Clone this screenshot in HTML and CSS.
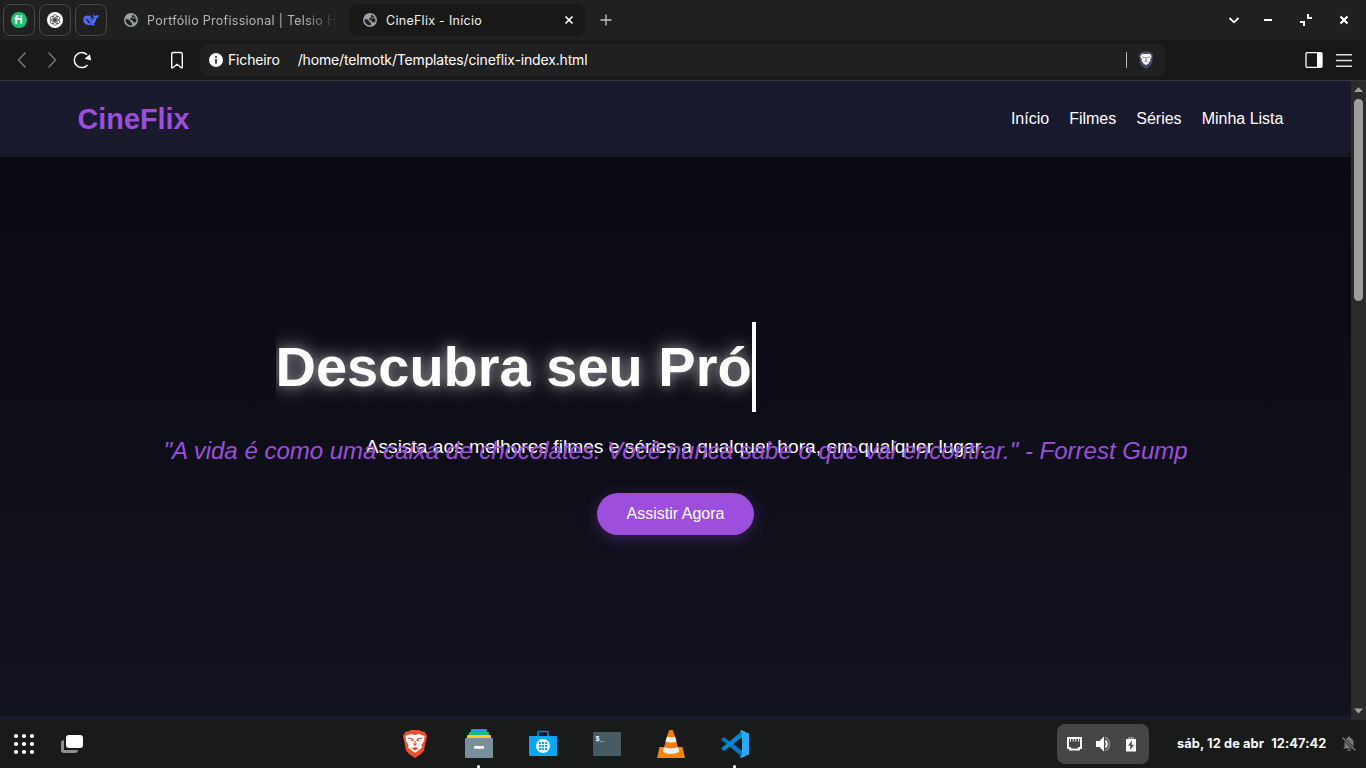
FILE: index.html
```html
<!DOCTYPE html>
<html lang="pt">
<head>
<meta charset="utf-8">
<title>CineFlix - Início</title>
<link rel="stylesheet" href="styles.css">
</head>
<body>
<svg class="defs" width="0" height="0">
  <symbol id="globe" viewBox="0 0 14 14"><circle cx="7" cy="7" r="7" fill="#9aa0a6"/><path d="M1.500 6.300H4l2.500 2v1.200h1.300l.4 2.800A5.600 5.600 0 0 1 1.500 6.300ZM8.200 1.700c3 .8 4.500 3.400 4.200 6.200l-1.100 1.700-2.100-.3-.5-1.700-2.400-.8V5.300l1.800-.8Z" fill="#202020"/><path d="m8.500 5.500 2-1.200 1 1.500" stroke="#9aa0a6" stroke-width="1" fill="none"/></symbol>
</svg>
<div class="tabbar">
  <div class="pins">
    <div class="pin"><svg width="18" height="18" viewBox="0 0 18 18"><circle cx="9" cy="9" r="8" fill="#1dbf73"/><path d="M4.400 7.700h6.900v5.100M6.200 12.800V7c0-1.700.8-2.300 2.500-2.100" fill="none" stroke="#fff" stroke-width="1.900"/><circle cx="11.300" cy="5.200" r="1.100" fill="#fff"/></svg></div>
    <div class="pin"><svg width="18" height="18" viewBox="0 0 18 18"><circle cx="9" cy="9" r="8" fill="#fff"/><g fill="none" stroke="#333" stroke-width=".65"><ellipse cx="9" cy="6.600" rx="2.200" ry="3"/><ellipse cx="9" cy="6.600" rx="2.200" ry="3" transform="rotate(60 9 9)"/><ellipse cx="9" cy="6.600" rx="2.200" ry="3" transform="rotate(120 9 9)"/><ellipse cx="9" cy="6.600" rx="2.200" ry="3" transform="rotate(180 9 9)"/><ellipse cx="9" cy="6.600" rx="2.200" ry="3" transform="rotate(240 9 9)"/><ellipse cx="9" cy="6.600" rx="2.200" ry="3" transform="rotate(300 9 9)"/></g></svg></div>
    <div class="pin"><svg width="18" height="18" viewBox="0 0 18 18"><path d="M1.200 8.500C1.200 5.600 3.800 4.200 6.300 4.700c1 .2 1.300-.4 2.200-.2-.2.900.2 1.300.8 1.800 1 .8 1.700 1.300 2.300 2.100.6-.7.7-1.300 0-2.100-.6-.8-.6-2-.1-2.900.8 1.100 1.500 1.700 2.500 1.400 1-.4 1.600-.7 2.800-.8 0 2-1.200 3.300-2.700 3.600-.2 2.500-1.100 4.300-2.500 5.500l1.500 1.200c-1.500.6-2.800.3-4.200-.5-4 1.400-7.700-1.400-7.700-5.300Z" fill="#4d6bfe"/><path d="M3.200 7.500c2.500 0 4 2.300 5.400 4.400l1.300.5c-1.600.4-2.900-.1-4.100-1.400C4.600 9.800 4.500 8.800 3.200 7.500Z" fill="#202020"/><path d="M7.800 7.700c1.400-.1 2.200.7 2.300 2" fill="none" stroke="#202020" stroke-width=".9"/></svg></div>
  </div>
  <div class="tab"><svg width="14" height="14"><use href="#globe"/></svg><span class="tab-label faded">Portfólio Profissional | Telsio H.</span></div>
  <div class="tab active"><svg width="14" height="14"><use href="#globe"/></svg><span class="tab-label">CineFlix - Início</span><svg class="close" width="10" height="10" viewBox="0 0 10 10"><path d="M1.500 1.500l7 7m0-7l-7 7" stroke="#fff" stroke-width="1.700"/></svg></div>
  <svg class="plus" width="12" height="12" viewBox="0 0 12 12"><path d="M6 .5v11M.5 6h11" stroke="#c4c4c4" stroke-width="1.300"/></svg>
  <svg class="win" width="130" height="20" viewBox="1224 10 130 20" fill="none" stroke="#fff" stroke-width="2"><path d="M1229.500 18l4.500 4.300 4.500-4.300" stroke-width="1.800"/><path d="M1264 20h8M1308 14v4h4M1300 22h4v4"/><path d="M1340.500 16.500l7 7m0-7l-7 7" stroke-width="2.200"/></svg>
</div>
<div class="toolbar">
  <svg class="nav" width="190" height="24" viewBox="0 48 190 24" fill="none" stroke="#777" stroke-width="1.400"><path d="M25.500 52.500 18.500 60l7 7.500M48.500 52.500l7 7.500-7 7.500"/><path d="M87 54.700A7.500 7.500 0 1 0 87.500 65" stroke="#fff" stroke-width="1.500"/><path d="m86 58.500 3.500-3 .8 4Z" fill="#fff" stroke="#fff"/><path d="M171.700 54a1.500 1.500 0 0 1 1.500-1.500h7.600a1.500 1.500 0 0 1 1.500 1.500v13.200c0 .8-.5.900-1 .5L177 64.300l-4.300 3.400c-.5.400-1 .3-1-.5Z" stroke="#fff"/></svg>
  <div class="address">
    <svg width="14" height="14" viewBox="0 0 14 14"><circle cx="7" cy="7" r="7" fill="#fff"/><path d="M7 3v1.700M7 6v4.700" stroke="#202020" stroke-width="1.600"/></svg>
    <span class="scheme">Ficheiro</span><span class="url">/home/telmotk/Templates/cineflix-index.html</span>
    <i class="sep"></i>
    <svg width="16" height="18" viewBox="0 0 16 18"><path d="m4 1 2-.6h4l2 .6 2.500 1.500.5 2.500-1 7c-1 2.500-3.500 4.500-6 5.800C5.500 16.500 3 14.500 2 12L1 5l.5-2.500Z" fill="#4a4a62"/><path d="m3.200 3.600 2.300-.8L8 3.300l2.500-.5 2.300.8.8 2.200-1.400 2.400.4 1.900-1.600 1.200-.4 1.200L8 14l-2.600-1.500-.4-1.200-1.600-1.200.4-1.900-1.400-2.400Z" fill="#fff"/><path d="m4.300 6 2.400.7M11.700 6l-2.400.7M8 6v3.400M6.500 10.800 8 9.700l1.500 1.100" fill="none" stroke="#4a4a62" stroke-width=".8"/></svg>
  </div>
  <svg class="side" width="50" height="20" viewBox="1304 50 50 20" fill="none"><rect x="1306" y="52.700" width="16" height="14.600" rx="1" stroke="#fff" stroke-width="1.300"/><path d="M1317 53h5v14h-5Z" fill="#fff"/><path d="M1336 54.700h16M1336 60.500h16M1336 66.300h16" stroke="#ddd" stroke-width="1.400"/></svg>
</div>
<div class="viewport">
  <div class="page">
    <header class="site-header">
      <div class="logo">CineFlix</div>
      <nav class="menu"><a>Início</a><a>Filmes</a><a>Séries</a><a>Minha Lista</a></nav>
    </header>
    <main class="hero">
      <h1 class="headline">Descubra seu Pró</h1>
      <div class="intro"><p class="lead">Assista aos melhores filmes e séries a qualquer hora, em qualquer lugar.</p><p class="quote">"A vida é como uma caixa de chocolates. Você nunca sabe o que vai encontrar." - Forrest Gump</p></div>
      <button class="cta">Assistir Agora</button>
    </main>
  </div>
  <div class="scrollbar"><svg width="15" height="18"><path d="M3 11h9L7.500 6Z" fill="#a0a0a0"/></svg><i class="thumb"></i><svg class="down" width="15" height="18"><path d="M3 6.500h9l-4.500 5Z" fill="#a0a0a0"/></svg></div>
</div>
<footer class="dock">
  <svg class="launch" width="90" height="48" viewBox="0 0 90 48"><g fill="#fff"><circle cx="16" cy="16" r="2.100"/><circle cx="24" cy="16" r="2.100"/><circle cx="32" cy="16" r="2.100"/><circle cx="16" cy="24" r="2.100"/><circle cx="24" cy="24" r="2.100"/><circle cx="32" cy="24" r="2.100"/><circle cx="16" cy="32" r="2.100"/><circle cx="24" cy="32" r="2.100"/><circle cx="32" cy="32" r="2.100"/><path d="M61 23q0-3 3-3v10h14q0 3-3 3H64q-3 0-3-3Z" fill="#8d8d8d"/><rect x="66" y="15" width="17" height="13" rx="3"/></g></svg>
  <div class="apps">
    <div class="app"><svg width="32" height="32" viewBox="0 0 32 32"><path d="m9 3.500 3-1.500h8l3 1.500h2.300l2.700 4.500-1 4.500-2 10-3 3.500-6 4-6-4-3-3.500-2-10L4 8l2.700-4.500Z" fill="#f04e30"/><path d="m6.500 8 5-2 4.500 1 4.500-1 5 2-.5 5-2.500 4 .5 2.500-3 2.500L16 25l-4-3-3-2.500.5-2.500L7 13Z" fill="#fff"/><path d="m9 10 4.500 1 .5 1.500-2-.2M23 10l-4.500 1-.5 1.500 2-.2M16 13v3.500M14.500 15.500l1.500 1.800 1.500-1.800" fill="none" stroke="#f04e30" stroke-width="1.100"/><path d="m12.500 20.500 3.500-1.600 3.500 1.600-3.500 2Z" fill="#f04e30"/></svg></div>
    <div class="app open"><svg width="32" height="32" viewBox="0 0 32 32"><path d="M8 4.500V2q0-1 1-1h14q1 0 1 1v2.500Z" fill="#2196f3"/><path d="M6 8V5q0-1 1-1h18q1 0 1 1v3Z" fill="#1abc7c"/><path d="M4 11V8q0-1 1-1h22q1 0 1 1v3Z" fill="#ffc928"/><rect x="2" y="10" width="28" height="20" rx="1" fill="#78909c"/><rect x="11" y="18" width="10" height="2.800" rx="1" fill="#fff"/></svg></div>
    <div class="app"><svg width="32" height="32" viewBox="0 0 32 32"><path d="M11 8V5q0-1.500 1.500-1.500h7Q21 3.500 21 5v3" fill="none" stroke="#0288d1" stroke-width="1.700"/><rect x="2" y="8" width="28" height="20" rx="1" fill="#03a9f4"/><circle cx="16" cy="18" r="7" fill="#fff"/><g fill="#03a9f4"><path d="M12 14h2v2h-2zM15 14h2v2h-2zM18 14h2v2h-2zM12 17h2v2h-2zM15 17h2v2h-2zM18 17h2v2h-2zM12 20h2v2h-2zM15 20h2v2h-2zM18 20h2v2h-2z"/></g></svg></div>
    <div class="app"><svg width="32" height="32" viewBox="0 0 32 32"><rect x="2" y="4" width="28" height="24" rx="1" fill="#455a64"/><text x="4.500" y="13" class="prompt">$_</text></svg></div>
    <div class="app"><svg width="32" height="32" viewBox="0 0 32 32"><path d="M4.500 19h23L30 30H2Z" fill="#ff8500"/><path d="m13.700 3 .8-1h3l.8 1L24 23c-2 3.200-14 3.200-16 0Z" fill="#f57c00"/><path d="m12 8.500-1.600 5c3 1.500 8.200 1.500 11.200 0L20 8.500c-2.200 1-5.800 1-8 0ZM9 19l-1.200 4c2 4 14.400 4 16.400 0L23 19c-3 1.700-11 1.700-14 0Z" fill="#eee"/></svg></div>
    <div class="app open"><svg width="32" height="32" viewBox="0 0 32 32"><path d="m2 11.500 3-2.500 19 14.500v6.200Z" fill="#0277bd"/><path d="m2 20.500 3 2.500L24 8.500V2.300Z" fill="#0288d1"/><path d="m22 2 8 3.500v21L22 30l-1-1.500L23 27V5l-2-1.500Z" fill="#29a9f3"/></svg></div>
  </div>
  <div class="tray"><svg width="92" height="40" viewBox="0 0 92 40"><path d="M11 14h13v10h-2v1.500h-9V24h-2Z" fill="none" stroke="#fff" stroke-width="2"/><path d="M13.500 14v3.500M16.200 14v3.500M18.800 14v3.500M21.500 14v3.500" stroke="#fff" stroke-width="1"/><path d="M39 17h3.500l4.500-4.500v15L42.500 23H39Z" fill="#fff"/><path d="M48.500 16.500q2.500 3.500 0 7" fill="none" stroke="#fff" stroke-width="2"/><path d="M48 13.500c6 2 6 11 0 13" fill="none" stroke="#888" stroke-width="1.500"/><path d="M71 13h6v2h-6Z" fill="#888"/><path d="M69 15h10v12q0 .5-.5.500h-9q-.5 0-.5-.5Z" fill="#fff"/><path d="m75 16.500-4 5h2.500L73 26l4-5.300h-2.500Z" fill="#444"/></svg></div>
  <div class="clock"><span>sáb, 12 de abr</span><span class="time">12:47:42</span></div>
  <svg class="bell" width="16" height="18" viewBox="0 0 16 18"><path d="M2 13.500 3.500 12V7.500C3.500 4.500 5 3 7 2.700V1.500h2v1.200c2 .3 3.500 1.800 3.500 4.800V12l1.500 1.500ZM6 14.500h4q-.5 1.800-2 1.800t-2-1.800" fill="#777"/><path d="m1 2 14 14" stroke="#191b1a" stroke-width="3"/><path d="m1.500 2.500 13 13" stroke="#777" stroke-width="1.400"/></svg>
</footer>
</body>
</html>
```
FILE: styles.css
```css
* { box-sizing: border-box; }
body { margin: 0; width: 1366px; height: 768px; overflow: hidden; background: #191b1a; color: #fff; font-family: Inter, sans-serif; display: flex; flex-direction: column; }
svg { display: block; flex: none; }
.defs { position: absolute; }
.tabbar { height: 40px; flex: none; background: #202020; display: flex; align-items: center; }
.pins { display: flex; gap: 4px; padding-left: 3px; width: 107px; flex: none; }
.pin { width: 32px; height: 32px; border: 1px solid #494949; border-radius: 8px; display: flex; align-items: center; justify-content: center; }
.tab { width: 235px; height: 32px; margin-left: 4px; padding: 0 11px 0 13px; display: flex; align-items: center; gap: 9px; font-size: 12.500px; letter-spacing: .28px; color: #b4b4b4; border-radius: 8px; white-space: nowrap; }
.tab.active { background: #181818; color: #f0f0f0; }
.tab-label { flex: 1; overflow: hidden; }
.faded { margin-right: -6px; -webkit-mask-image: linear-gradient(to right, #000 82%, transparent 98%); mask-image: linear-gradient(to right, #000 82%, transparent 98%); }
.plus { margin-left: 15px; }
.win { margin: 0 12px 0 auto; }
.toolbar { height: 41px; flex: none; background: #181818; border-bottom: 1px solid #363538; display: flex; align-items: center; }
.address { width: 966px; height: 32px; margin-left: 10px; padding: 0 12px 0 9px; background: #202020; border-radius: 8px; display: flex; align-items: center; font-size: 14px; letter-spacing: -.15px; }
.scheme { margin-left: 5px; padding-bottom: 2px; }
.url { margin-left: 18px; padding-bottom: 2px; }
.sep { width: 1px; height: 16px; background: #bbb; margin: 0 11px 0 auto; }
.side { margin: 0 12px 0 auto; }
.viewport { height: 639px; flex: none; display: flex; font-family: "Liberation Sans", Arial, sans-serif; }
.page { width: 1351px; height: 639px; background: #1a1a2e; }
.site-header { height: 76px; padding: 0 67.550px; background: linear-gradient(#1a1a2e, #1a1a2e 60%, #18182a); display: flex; justify-content: space-between; align-items: center; }
.logo { margin-left: 10px; font-size: 28.800px; font-weight: bold; color: #9d4edd; }
.menu { display: flex; gap: 20px; font-size: 16px; }
.hero { height: 559px; padding-top: 165px; background: linear-gradient(#0a0a12, #0f0f1a 60%, #13121f); display: flex; flex-direction: column; align-items: center; }
.headline { align-self: flex-start; margin: 0 0 0 275.500px; width: 480.500px; height: 90px; line-height: 89.600px; font-size: 56px; white-space: nowrap; overflow: hidden; border-right: 4px solid #fff; text-shadow: 0 0 10px rgba(255,255,255,.25), 0 0 20px rgba(255,255,255,.55); }
.intro { position: relative; width: 1351px; margin-top: 20px; height: 31px; text-align: center; }
.lead { margin: 0; font-size: 19.200px; line-height: 30.720px; }
.quote { position: absolute; inset: 0; margin: 0; font-size: 24px; line-height: 38.400px; font-style: italic; color: #9d4edd; white-space: nowrap; }
.cta { width: 157px; height: 42px; margin-top: 30px; padding: 0; border: 0; border-radius: 21px; background: #9d4edd; color: #fff; font: 16px "Liberation Sans", Arial, sans-serif; box-shadow: 0 4px 15px rgba(157,78,221,.3); }
.scrollbar { width: 15px; background: #2b2b2b; display: flex; flex-direction: column; align-items: center; }
.thumb { width: 9px; height: 202px; border-radius: 5px; background: #9e9e9e; }
.down { margin-top: auto; }
.dock { height: 48px; flex: none; background: #191b1a; display: flex; align-items: center; }
.apps { display: flex; gap: 16px; margin-left: 301px; }
.app { width: 48px; height: 48px; padding-top: 8px; display: flex; flex-direction: column; align-items: center; }
.open::after { content: ""; width: 3px; height: 3px; border-radius: 2px 2px 0 0; background: #fff; margin: 5px 1px 0 0; }
.prompt { font: bold 7px "Liberation Mono", monospace; fill: #fff; }
.tray { width: 92px; height: 40px; margin-left: 298px; border-radius: 8px; background: #454645; }
.clock { margin-left: 28px; width: 149.500px; padding-bottom: 1px; display: flex; justify-content: space-between; font-size: 12.800px; letter-spacing: .1px; font-weight: 700; white-space: nowrap; }
.bell { margin-left: 14.500px; }
```
